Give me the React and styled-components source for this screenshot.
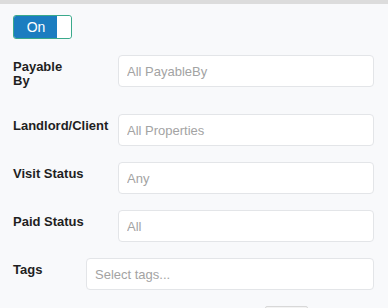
import React from "react";
import styled, { createGlobalStyle } from "styled-components";

const Global = createGlobalStyle`
  html, body { margin: 0; padding: 0; }
  body {
    background: #f8f9fb;
    font-family: "Liberation Sans", Arial, sans-serif;
    color: #222;
  }
  * { box-sizing: border-box; }
`;

const TopBar = styled.div`
  height: 4px;
  background: #dcdcdc;
`;

const Panel = styled.div`
  padding: 11px 14px 0 13px;
`;

const Toggle = styled.div`
  display: flex;
  width: 59px;
  height: 24px;
  border: 1px solid #3aa98b;
  border-radius: 3px;
  overflow: hidden;
  margin-bottom: 16px;
`;

const ToggleLabel = styled.div`
  width: 43px;
  background: #1b7dc0;
  color: #fff;
  font-size: 14px;
  display: flex;
  align-items: center;
  justify-content: center;
  padding-left: 1px;
`;

const Knob = styled.div`
  flex: 1;
  background: #fff;
  border-radius: 0 2px 2px 0;
`;

const Row = styled.div`
  display: flex;
  align-items: flex-start;
  margin-bottom: 16px;
`;

const Label = styled.div`
  width: ${(p) => p.$width}px;
  flex: none;
  font-size: 13px;
  font-weight: bold;
  line-height: 14px;
  padding: ${(p) => (p.$tall ? "5px 0 10px" : "5px 0 0")};
  color: #1f1f1f;
`;

const Field = styled.input`
  flex: 1;
  min-width: 0;
  height: 32px;
  border: 1px solid #e3e5e8;
  border-radius: 4px;
  background: #fff;
  padding: 0 0 0 ${(p) => p.$pad}px;
  font-family: "Liberation Sans", Arial, sans-serif;
  font-size: 13px;
  outline: none;
  &::placeholder { color: #a3a3a3; }
`;

const Footer = styled.div`
  display: flex;
  justify-content: flex-end;
  padding-right: 66px;
`;

const Button = styled.button`
  width: 43px;
  height: 28px;
  border: 1px solid #d8d8d8;
  border-radius: 2px;
  background: #f3f3f3;
`;

const rows = [
  { label: "Payable By", placeholder: "All PayableBy", tall: true, labelBreak: ["Payable", "By"] },
  { label: "Landlord/Client", placeholder: "All Properties" },
  { label: "Visit Status", placeholder: "Any" },
  { label: "Paid Status", placeholder: "All" },
];

export default function App() {
  return (
    <>
      <Global />
      <TopBar />
      <Panel>
        <Toggle>
          <ToggleLabel>On</ToggleLabel>
          <Knob />
        </Toggle>
        {rows.map((r) => (
          <Row key={r.label}>
            <Label $width={105} $tall={r.tall}>
              {r.labelBreak ? (
                <>
                  {r.labelBreak[0]}
                  <br />
                  {r.labelBreak[1]}
                </>
              ) : (
                r.label
              )}
            </Label>
            <Field $pad={8} placeholder={r.placeholder} readOnly />
          </Row>
        ))}
        <Row>
          <Label $width={73}>Tags</Label>
          <Field $pad={8} placeholder="Select tags..." readOnly />
        </Row>
        <Footer>
          <Button />
        </Footer>
      </Panel>
    </>
  );
}
